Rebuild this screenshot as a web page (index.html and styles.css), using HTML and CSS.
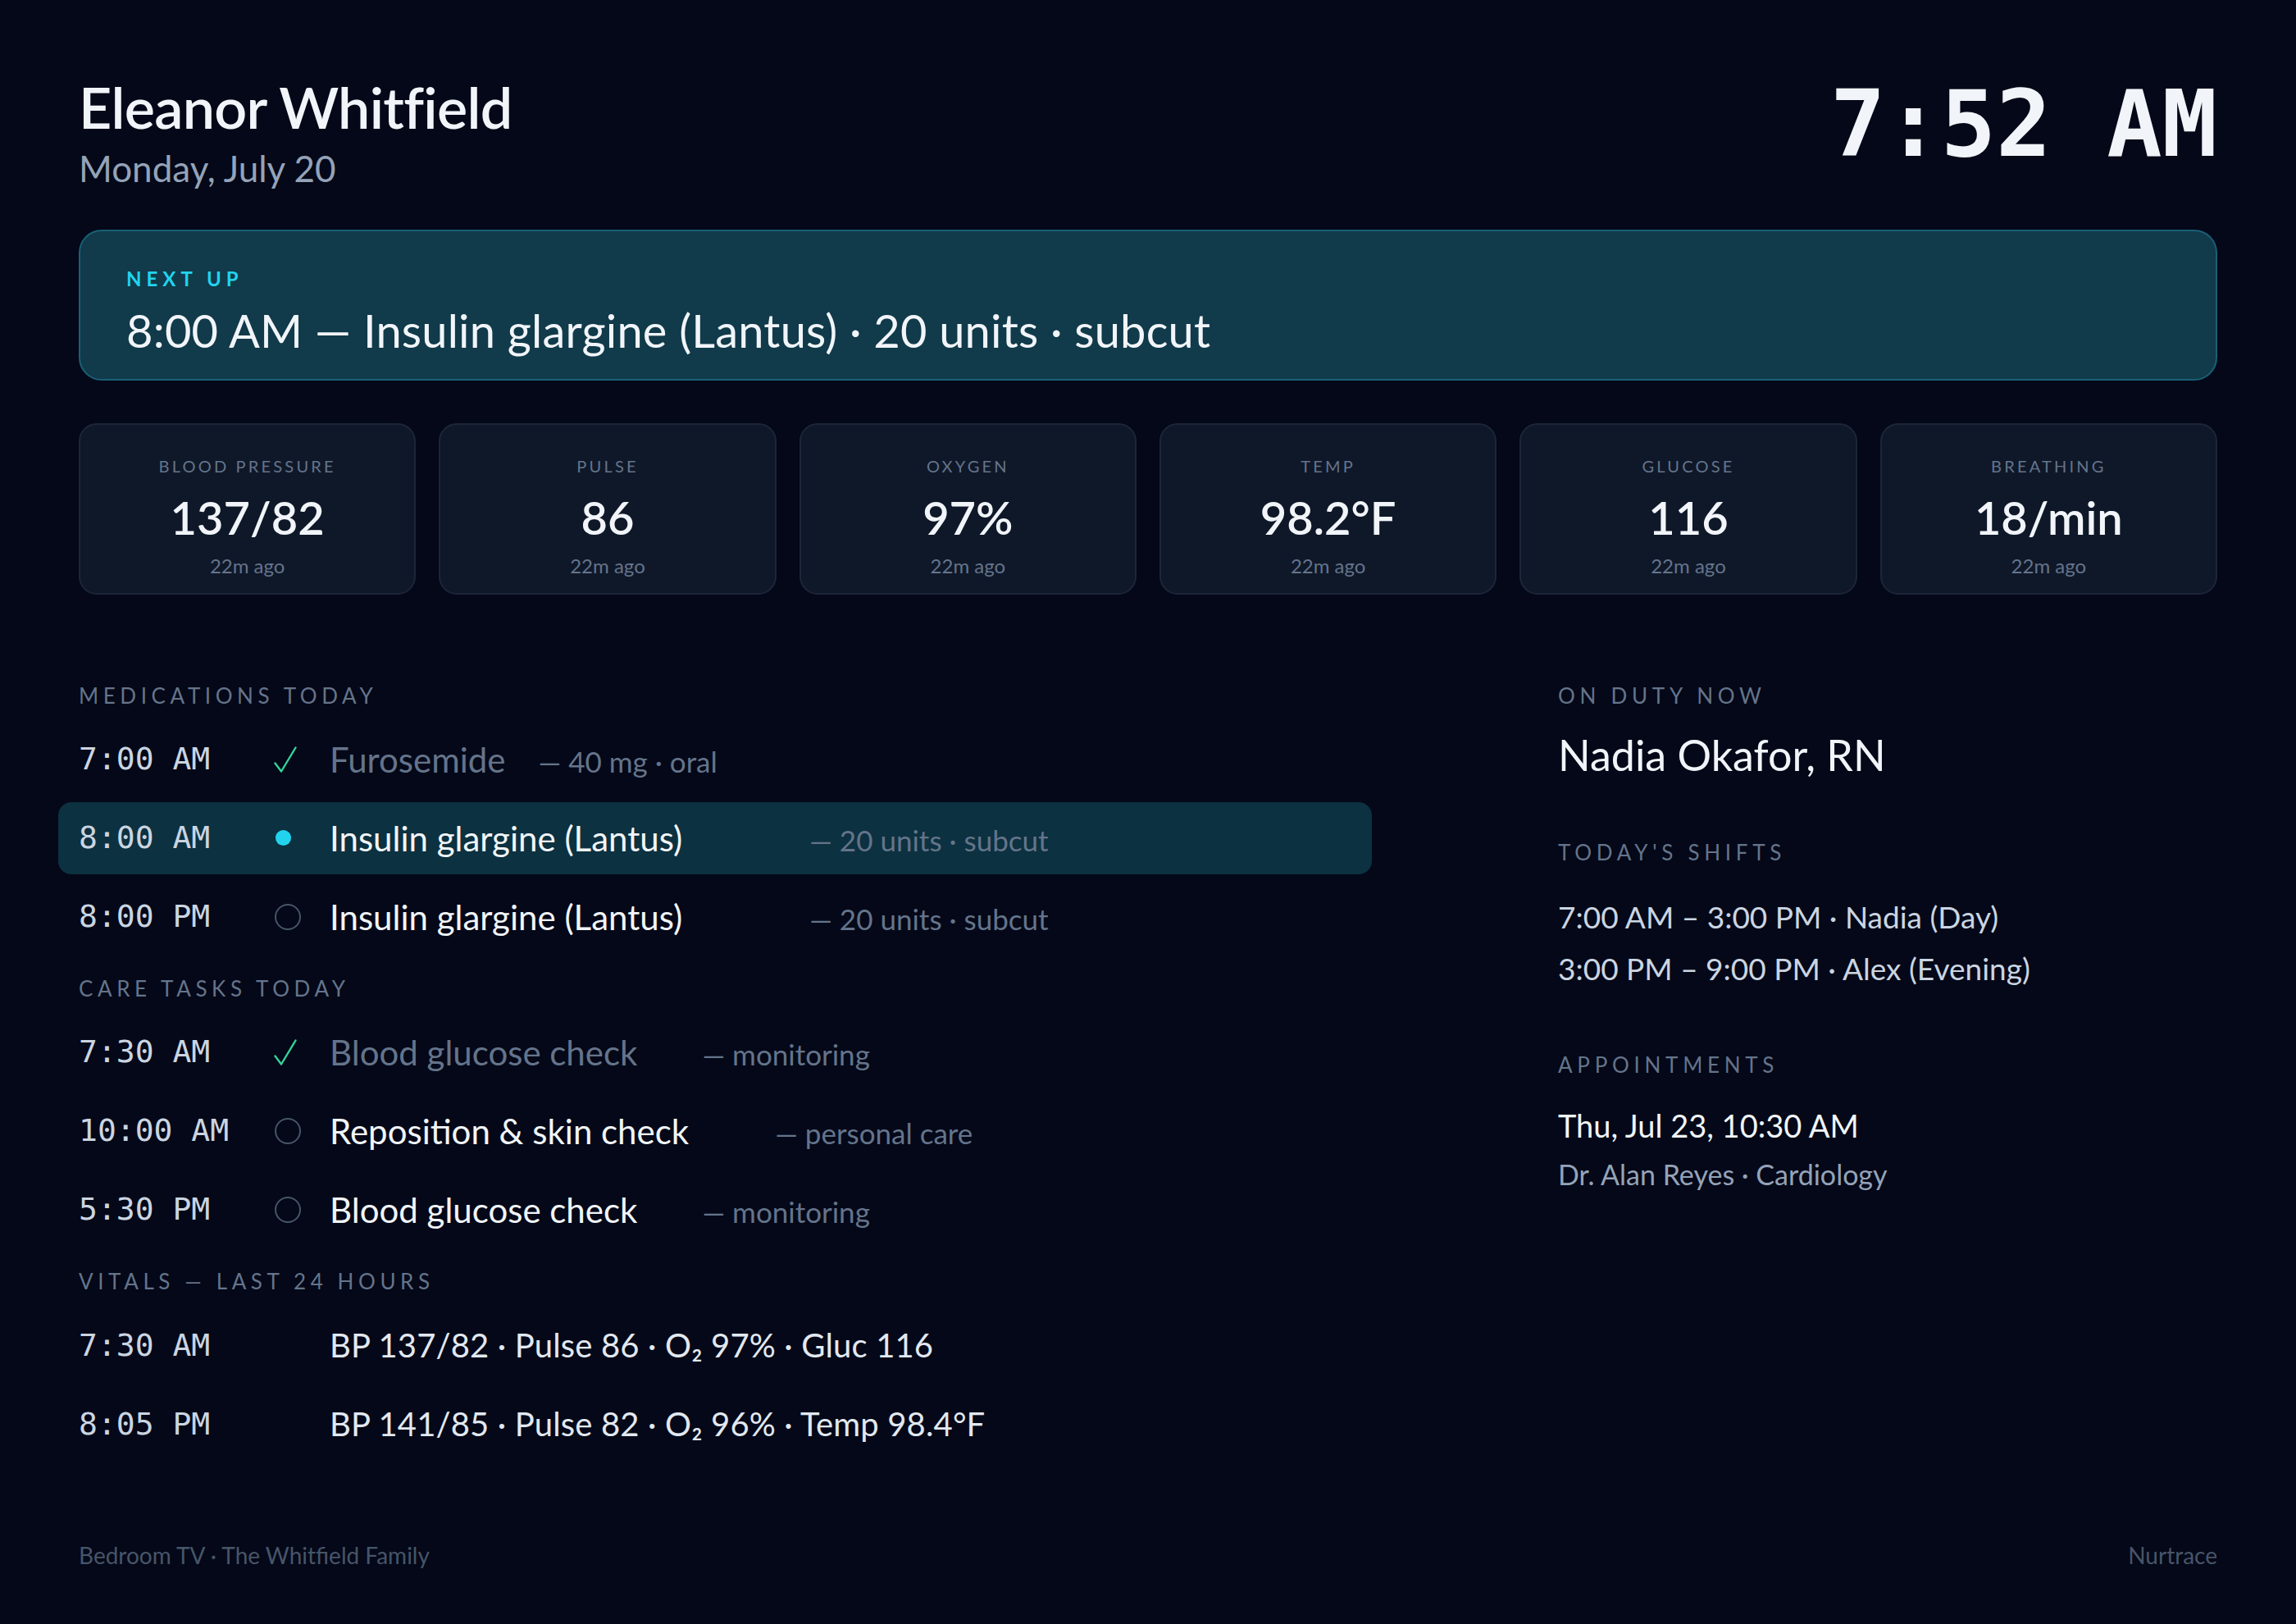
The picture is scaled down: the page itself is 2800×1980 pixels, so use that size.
FILE: index.html
```html
<!DOCTYPE html>
<html>
    <head>
        <meta charset="utf-8">
        <title>Eleanor Whitfield · Bedroom TV</title>
        <link rel="stylesheet" href="styles.css">
    </head>
    <body>
        <div class="screen">
            <header class="top">
                <div class="who">
                    <h1 class="patient">Eleanor Whitfield</h1>
                    <div class="date">Monday, July 20</div>
                </div>
                <div class="clock">7:52 AM</div>
            </header>

            <section class="next">
                <div class="next-label">NEXT UP</div>
                <div class="next-text">8:00 AM — Insulin glargine (Lantus) · 20 units · subcut</div>
            </section>

            <section class="vitals">
                <div class="vital">
                    <div class="vital-label">Blood pressure</div>
                    <div class="vital-value">137/82</div>
                    <div class="vital-age">22m ago</div>
                </div>
                <div class="vital">
                    <div class="vital-label">Pulse</div>
                    <div class="vital-value">86</div>
                    <div class="vital-age">22m ago</div>
                </div>
                <div class="vital">
                    <div class="vital-label">Oxygen</div>
                    <div class="vital-value">97%</div>
                    <div class="vital-age">22m ago</div>
                </div>
                <div class="vital">
                    <div class="vital-label">Temp</div>
                    <div class="vital-value">98.2°F</div>
                    <div class="vital-age">22m ago</div>
                </div>
                <div class="vital">
                    <div class="vital-label">Glucose</div>
                    <div class="vital-value">116</div>
                    <div class="vital-age">22m ago</div>
                </div>
                <div class="vital">
                    <div class="vital-label">Breathing</div>
                    <div class="vital-value">18/min</div>
                    <div class="vital-age">22m ago</div>
                </div>
            </section>

            <main class="board">
                <div class="schedule">
                    <h2 class="section-title">Medications today</h2>
                    <ul class="rows">
                        <li class="row done">
                            <span class="time">7:00 AM</span>
                            <span class="mark"><svg class="check" viewBox="0 0 28 32"><path d="M1.5 20.5 L9 30.5 L26.5 1.5"/></svg></span>
                            <span class="what"><span class="name">Furosemide</span><span class="detail">— 40 mg · oral</span></span>
                        </li>
                        <li class="row now">
                            <span class="time">8:00 AM</span>
                            <span class="mark"><span class="dot"></span></span>
                            <span class="what"><span class="name">Insulin glargine (Lantus)</span><span class="detail s3">— 20 units · subcut</span></span>
                        </li>
                        <li class="row">
                            <span class="time">8:00 PM</span>
                            <span class="mark"><span class="ring"></span></span>
                            <span class="what"><span class="name">Insulin glargine (Lantus)</span><span class="detail s3">— 20 units · subcut</span></span>
                        </li>
                    </ul>

                    <h2 class="section-title">Care tasks today</h2>
                    <ul class="rows">
                        <li class="row done">
                            <span class="time">7:30 AM</span>
                            <span class="mark"><svg class="check" viewBox="0 0 28 32"><path d="M1.5 20.5 L9 30.5 L26.5 1.5"/></svg></span>
                            <span class="what"><span class="name">Blood glucose check</span><span class="detail s1">— monitoring</span></span>
                        </li>
                        <li class="row">
                            <span class="time">10:00 AM</span>
                            <span class="mark"><span class="ring"></span></span>
                            <span class="what"><span class="name">Reposition &amp; skin check</span><span class="detail s2">— personal care</span></span>
                        </li>
                        <li class="row">
                            <span class="time">5:30 PM</span>
                            <span class="mark"><span class="ring"></span></span>
                            <span class="what"><span class="name">Blood glucose check</span><span class="detail s1">— monitoring</span></span>
                        </li>
                    </ul>

                    <h2 class="section-title">Vitals — last 24 hours</h2>
                    <ul class="rows">
                        <li class="row">
                            <span class="time">7:30 AM</span>
                            <span class="mark"></span>
                            <span class="what reading">BP 137/82 · Pulse 86 · O₂ 97% · Gluc 116</span>
                        </li>
                        <li class="row">
                            <span class="time">8:05 PM</span>
                            <span class="mark"></span>
                            <span class="what reading">BP 141/85 · Pulse 82 · O₂ 96% · Temp 98.4°F</span>
                        </li>
                    </ul>
                </div>

                <aside class="side">
                    <div class="block">
                        <h2 class="section-title">On duty now</h2>
                        <div class="nurse">Nadia Okafor, RN</div>
                    </div>
                    <div class="block shifts">
                        <h2 class="section-title">Today's shifts</h2>
                        <div class="shift">7:00 AM – 3:00 PM · Nadia (Day)</div>
                        <div class="shift">3:00 PM – 9:00 PM · Alex (Evening)</div>
                    </div>
                    <div class="block appts">
                        <h2 class="section-title">Appointments</h2>
                        <div class="appt-when">Thu, Jul 23, 10:30 AM</div>
                        <div class="appt-who">Dr. Alan Reyes · Cardiology</div>
                    </div>
                </aside>
            </main>

            <footer class="foot">
                <span>Bedroom TV · The Whitfield Family</span>
                <span>Nurtrace</span>
            </footer>
        </div>
    </body>
</html>
```

FILE: styles.css
```css
* {
    box-sizing: border-box;
}
html, body {
    margin: 0;
    background: #040818;
}
body {
    font-family: Lato, "Noto Sans", sans-serif;
    color: #f1f5f9;
    line-height: 1.2;
}
.screen {
    width: 2800px;
    height: 1980px;
    padding: 86px 96px 66px;
    display: flex;
    flex-direction: column;
}

/* header */
.top {
    display: flex;
    justify-content: space-between;
    align-items: flex-start;
}
.patient {
    margin: 0;
    padding-top: 2px;
    font-size: 70px;
    font-weight: 600;
    letter-spacing: -.01em;
}
.date {
    margin-top: 7px;
    font-size: 44px;
    color: #94a3b8;
}
.clock {
    margin-top: 9px;
    font: 700 112px/1 "DejaVu Sans Mono", monospace;
    color: #f1f5f9;
}

/* next dose banner */
.next {
    margin-top: 48px;
    background: #113a4a;
    border: 2px solid #1a6077;
    border-radius: 28px;
    padding: 44px 56px 26px;
}
.next-label {
    font-size: 24px;
    font-weight: 700;
    letter-spacing: .25em;
    color: #22d3ee;
}
.next-text {
    margin-top: 14px;
    font-size: 56px;
    letter-spacing: .2px;
}

/* latest vitals */
.vitals {
    margin-top: 52px;
    display: grid;
    grid-template-columns: repeat(6, 1fr);
    gap: 28px;
}
.vital {
    background: #0f1829;
    border: 2px solid #1c2638;
    border-radius: 22px;
    padding: 38px 12px 18px;
    text-align: center;
}
.vital-label {
    font-size: 20px;
    letter-spacing: .16em;
    text-transform: uppercase;
    color: #64748b;
}
.vital-value {
    margin-top: 17px;
    font-size: 56px;
    font-weight: 600;
}
.vital-age {
    margin-top: 12px;
    font-size: 24px;
    color: #64748b;
}

/* schedule + side info */
.board {
    margin-top: 108px;
    display: grid;
    grid-template-columns: 1552px 1fr;
    column-gap: 252px;
}
.section-title {
    margin: 28px 0 18px;
    font-size: 26px;
    font-weight: 400;
    letter-spacing: .215em;
    text-transform: uppercase;
    color: #64748b;
}
.schedule .section-title:first-child {
    margin-top: 0;
}
.rows {
    list-style: none;
    margin: 0;
    padding: 0;
    display: flex;
    flex-direction: column;
    gap: 8px;
}
.row {
    display: flex;
    align-items: center;
    height: 88px;
    margin: 0 -25px;
    padding: 0 25px;
    border-radius: 16px;
}
.row.now {
    background: #0c3140;
}
.time {
    width: 238px;
    flex: none;
    font-family: "DejaVu Sans Mono", monospace;
    font-size: 38px;
    color: #cbd5e1;
}
.mark {
    width: 68px;
    flex: none;
    display: flex;
    align-items: center;
}
.check {
    width: 28px;
    height: 32px;
    fill: none;
    stroke: #34d399;
    stroke-width: 2.4;
    stroke-linecap: round;
    stroke-linejoin: round;
}
.dot {
    width: 19px;
    height: 19px;
    margin-left: 2px;
    border-radius: 50%;
    background: #22d3ee;
}
.ring {
    width: 32px;
    height: 32px;
    margin-left: 1px;
    border: 2px solid #475569;
    border-radius: 50%;
}
.what {
    font-size: 42px;
    color: #f1f5f9;
}
.done .name {
    color: #64748b;
}
.detail {
    margin-left: 40px;
    font-size: 35px;
    color: #64748b;
}
.detail.s1 {
    margin-left: 79px;
}
.detail.s2 {
    margin-left: 105px;
}
.detail.s3 {
    margin-left: 155px;
}
.what.reading {
    font-size: 40px;
    letter-spacing: .15px;
    color: #e2e8f0;
}

.side .section-title {
    margin: 0;
    letter-spacing: .22em;
}
.nurse {
    margin-top: 25px;
    font-size: 52px;
}
.shifts {
    margin-top: 73px;
}
.shift {
    font-size: 37px;
    color: #cbd5e1;
    margin-top: 19px;
}
.shifts .section-title + .shift {
    margin-top: 40px;
}
.appts {
    margin-top: 80px;
}
.appt-when {
    margin-top: 35px;
    font-size: 38px;
}
.appt-who {
    margin-top: 17px;
    font-size: 34px;
    color: #94a3b8;
}

.foot {
    margin-top: auto;
    display: flex;
    justify-content: space-between;
    font-size: 28px;
    color: #475569;
}
```
